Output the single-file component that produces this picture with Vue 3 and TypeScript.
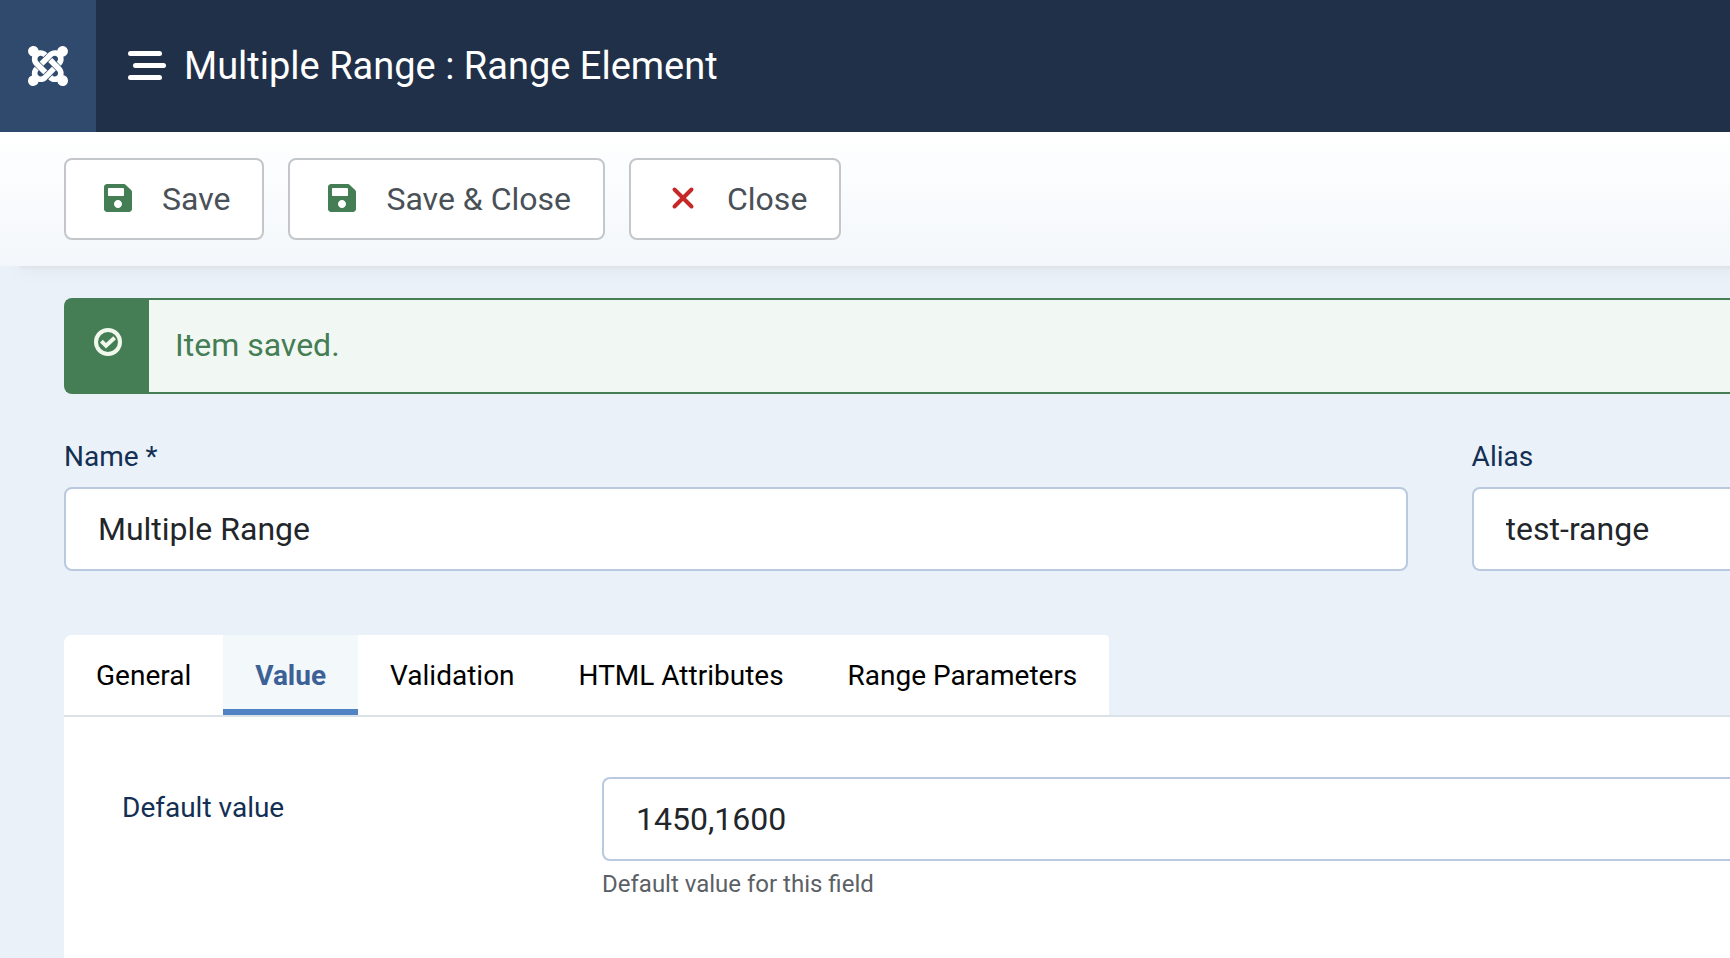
<script setup lang="ts">
import { ref } from 'vue'

interface ToolbarAction {
  label: string
  icon: 'save' | 'close'
}

const actions: ToolbarAction[] = [
  { label: 'Save', icon: 'save' },
  { label: 'Save & Close', icon: 'save' },
  { label: 'Close', icon: 'close' },
]

const tabs: string[] = ['General', 'Value', 'Validation', 'HTML Attributes', 'Range Parameters']
const activeTab = ref('Value')

const name = ref('Multiple Range')
const alias = ref('test-range')
const defaultValue = ref('1450,1600')
</script>

<template>
  <div class="page">
    <header class="header">
      <a href="#" class="brand" aria-label="Joomla">
        <svg viewBox="0 32 448 448" aria-hidden="true">
          <path d="M.6 92.1C.6 58.8 27.4 32 60.4 32c30 0 54.5 21.9 59.2 50.2 32.6-7.6 67.1.6 96.5 30l-44.3 44.3c-20.5-20.5-42.6-16.3-55.4-3.5-14.3 14.3-14.3 37.9 0 52.2l99.5 99.5-44 44.3c-87.7-87.2-49.7-49.7-99.8-99.7-26.8-26.5-35-64.8-24.8-98.9C20.4 144.6.6 120.7.6 92.1zm129.5 116.4l44.3 44.3c10-10 89.7-89.7 99.7-99.8 14.3-14.3 37.6-14.3 51.9 0 12.8 12.8 17 35-3.5 55.4l44 44.3c31.2-31.2 38.5-67.6 28.9-101.2 29.2-4.1 51.9-29.2 51.9-59.5 0-33.2-26.8-60.1-59.8-60.1-30.3 0-55.4 22.5-59.5 51.6-33.8-9.9-71.7-1.5-98.3 25.1-18.3 19.1-71.1 71.5-99.6 99.9zm266.3 152.2c8.2-32.7-.9-68.5-26.3-93.9-11.8-12.2 5 4.7-99.5-99.7l-44.3 44.3 99.7 99.7c14.3 14.3 14.3 37.6 0 51.9-12.8 12.8-35 17-55.4-3.5l-44 44.3c27.6 30.2 68 38.8 102.7 28 5.5 27.4 29.7 48.1 58.9 48.1 33 0 59.8-26.8 59.8-60.1 0-30.2-22.5-55-51.6-59.1zm-84.3-53.1l-44-44.3c-87 86.4-50.4 50.4-99.7 99.8-14.3 14.3-37.6 14.3-51.9 0-13.1-13.4-16.9-35.3 3.2-55.4l-44-44.3c-30.2 30.2-38 65.2-29.5 98.3-26.7 6-46.2 29.9-46.2 58.2C0 453.2 26.8 480 59.8 480c28.6 0 52.5-19.8 58.6-46.7 32.7 8.2 68.5-.6 94.2-26 32.1-32 12.2-12.4 99.5-99.7z" />
        </svg>
      </a>
      <h1 class="title">
        <svg viewBox="0 0 38 30" aria-hidden="true">
          <rect x="0" y="0" width="34" height="5" rx="2.5" />
          <rect x="5" y="12" width="33" height="5" rx="2.5" />
          <rect x="0" y="24" width="34" height="5" rx="2.5" />
        </svg>
        <span>Multiple Range : Range Element</span>
      </h1>
    </header>

    <nav class="toolbar" aria-label="Toolbar">
      <button v-for="action in actions" :key="action.label" type="button" class="action">
        <svg v-if="action.icon === 'save'" class="save" viewBox="0 32 448 448" aria-hidden="true">
          <path d="M433.941 129.941l-83.882-83.882A48 48 0 0 0 316.118 32H48C21.49 32 0 53.49 0 80v352c0 26.51 21.49 48 48 48h352c26.51 0 48-21.49 48-48V163.882a48 48 0 0 0-14.059-33.941zM224 416c-35.346 0-64-28.654-64-64 0-35.346 28.654-64 64-64s64 28.654 64 64c0 35.346-28.654 64-64 64zm96-304.52V212c0 6.627-5.373 12-12 12H76c-6.627 0-12-5.373-12-12V108c0-6.627 5.373-12 12-12h228.52c3.183 0 6.235 1.264 8.485 3.515l3.48 3.48A11.996 11.996 0 0 1 320 111.48z" />
        </svg>
        <svg v-else class="close" viewBox="0 0 28 28" aria-hidden="true">
          <path d="M5.5 5.5l17 17M22.5 5.5l-17 17" />
        </svg>
        <span>{{ action.label }}</span>
      </button>
    </nav>

    <main class="content">
      <div class="alert" role="alert">
        <div class="alert-icon">
          <svg viewBox="0 0 28 28" aria-hidden="true">
            <circle cx="14" cy="14" r="12" />
            <path d="M7.4 13.2l4.6 4.6 8.6-8" />
          </svg>
        </div>
        <p class="alert-text">Item saved.</p>
      </div>

      <form class="form" @submit.prevent>
        <div class="names">
          <div class="field">
            <label for="name">Name *</label>
            <input id="name" v-model="name" type="text" />
          </div>
          <div class="field bleed">
            <label for="alias">Alias</label>
            <input id="alias" v-model="alias" type="text" />
          </div>
        </div>

        <div class="tabbar">
          <div class="tabs" role="tablist">
            <button
              v-for="tab in tabs"
              :key="tab"
              type="button"
              role="tab"
              class="tab"
              :class="{ active: tab === activeTab }"
              :aria-selected="tab === activeTab"
              @click="activeTab = tab"
            >
              {{ tab }}
            </button>
          </div>
        </div>

        <section class="panel" role="tabpanel">
          <label for="default-value">Default value</label>
          <div class="control bleed">
            <input id="default-value" v-model="defaultValue" type="text" aria-describedby="default-help" />
            <p id="default-help" class="help">Default value for this field</p>
          </div>
        </section>
      </form>
    </main>
  </div>
</template>

<style>
body {
  margin: 0;
  background: #ebf1f8;
}
</style>

<style scoped>
.page {
  display: flex;
  flex-direction: column;
  min-height: 100vh;
  font-family: Roboto, "Liberation Sans", sans-serif;
  font-size: 32px;
  line-height: 48px;
  color: #22262a;
  background: #ebf1f8;
}

.page *,
.page {
  box-sizing: border-box;
}

button,
input {
  font: inherit;
}

.header {
  position: relative;
  z-index: 1;
  display: flex;
  height: 132px;
  background: #203048;
  color: #fff;
}

.brand {
  display: flex;
  align-items: center;
  justify-content: center;
  width: 96px;
  background: #2f4a6d;
}

.brand svg {
  width: 40px;
  height: 40px;
  fill: #fff;
}

.title {
  display: flex;
  align-items: center;
  gap: 18px;
  margin: 0;
  padding-left: 32px;
  font-size: 38px;
  font-weight: 400;
}

.title svg {
  width: 38px;
  height: 30px;
  fill: #fff;
}

.toolbar {
  display: flex;
  gap: 24px;
  padding: 26px 64px;
  background: linear-gradient(#fff, #f3f7fb);
  box-shadow: 20px 2px 2px #dce4ea, 20px 4px 14px #e0e6ed;
}

.action {
  display: flex;
  align-items: center;
  gap: 30px;
  height: 82px;
  padding: 0 32px 0 38px;
  border: 2px solid #c3c7cb;
  border-radius: 8px;
  background: #fff;
  color: #495057;
}

.action svg {
  width: 28px;
  height: 28px;
  margin-bottom: 2px;
}

.save {
  fill: #457d54;
}

.close {
  fill: none;
  stroke: #c52827;
  stroke-width: 4;
  stroke-linecap: round;
}

.content {
  display: flex;
  flex: 1;
  flex-direction: column;
  padding: 32px 0 0 64px;
}

.alert {
  display: flex;
  height: 96px;
  border: 2px solid #457d54;
  border-right: 0;
  border-radius: 8px 0 0 8px;
  background: #f1f8f3;
  color: #457d54;
}

.alert-icon {
  display: flex;
  justify-content: center;
  width: 83px;
  padding-top: 28px;
  background: #457d54;
}

.alert-icon svg {
  width: 28px;
  height: 28px;
  fill: none;
  stroke: #f1f8ec;
  stroke-width: 4;
}

.alert-text {
  margin: 0;
  padding: 21px 26px;
}

.form {
  display: flex;
  flex: 1;
  flex-direction: column;
  padding-top: 41px;
}

.names {
  display: grid;
  grid-template-columns: 26fr 5fr;
  gap: 64px;
}

.field {
  display: flex;
  flex-direction: column;
  gap: 8px;
  min-width: 0;
}

label {
  font-size: 28px;
  line-height: 44px;
  color: #132f53;
}

input {
  width: 100%;
  height: 84px;
  padding: 0 32px;
  border: 2px solid #b8c9e0;
  border-radius: 8px;
  background: #fff;
  color: #22262a;
}

.bleed input {
  border-right: 0;
  border-radius: 8px 0 0 8px;
}

.tabbar {
  display: flex;
  margin-top: 64px;
  border-bottom: 2px solid #dae2e8;
}

.tabs {
  display: flex;
  overflow: hidden;
  border-radius: 8px 4px 0 0;
  background: #fff;
}

.tab {
  height: 80px;
  padding: 2px 32px 0;
  border: 0;
  background: none;
  font-size: 28px;
  color: #000;
}

.tab.active {
  background: #f3f8fb;
  box-shadow: inset 0 -6px #5182c4;
  font-weight: 700;
  color: #3c6196;
}

.panel {
  display: grid;
  flex: 1;
  grid-template-columns: 480px 1fr;
  align-content: start;
  padding: 60px 0 0 58px;
  background: #fff;
}

.panel label {
  padding-top: 9px;
}

.help {
  margin: 4px 0 0;
  font-size: 24px;
  line-height: 38px;
  color: #5c6065;
}
</style>
